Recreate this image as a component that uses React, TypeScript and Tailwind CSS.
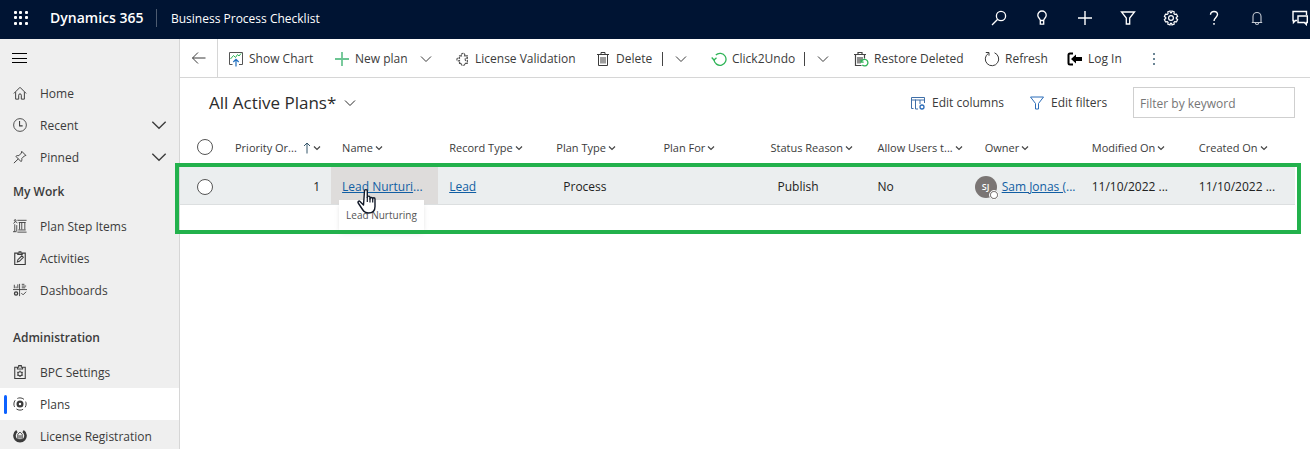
import type { ReactNode } from "react";

type IconProps = { children: ReactNode; className?: string };

function Icon({ children, className = "size-4" }: IconProps) {
  return (
    <svg
      viewBox="0 0 16 16"
      className={`${className} shrink-0`}
      fill="none"
      stroke="currentColor"
      strokeWidth="1"
      aria-hidden="true"
    >
      {children}
    </svg>
  );
}

const Chevron = ({ className = "size-3" }: { className?: string }) => (
  <svg viewBox="0 0 12 12" className={`${className} shrink-0`} fill="none" stroke="currentColor" strokeWidth="1" aria-hidden="true">
    <path d="M1 3.500 6 8.500 11 3.500" />
  </svg>
);

const SearchIcon = () => (
  <Icon>
    <circle cx="10" cy="6" r="4.6" strokeWidth="1.3" />
    <path d="M6.7 9.3 1 15" strokeWidth="1.3" />
  </Icon>
);
const BulbIcon = () => (
  <Icon>
    <path d="M6.300 10.500c0-2-2.500-2.700-2.500-5.300a4.200 4.200 0 0 1 8.400 0c0 2.600-2.500 3.300-2.500 5.300zM6.300 10.500v3.700h3.400v-3.700" strokeWidth="1.300" />
  </Icon>
);
const PlusIcon = () => (
  <Icon>
    <path d="M8 1v14M1 8h14" strokeWidth="1.4" />
  </Icon>
);
const FunnelIcon = () => (
  <Icon>
    <path d="M1.500 2h13L9.700 8v6H6.300V8z" strokeWidth="1.300" />
  </Icon>
);
const GearIcon = () => (
  <Icon>
    <path
      d="m7 1 .4 1.700h1.200L9 1l2.200.8-.3 1.800.8.8 1.800-.3L14.600 6.500 13.300 7.400v1.200l1.300.9-1.100 2.400-1.800-.3-.8.8.3 1.800L9 15l-.4-1.700H7.400L7 15l-2.200-.8.3-1.800-.8-.8-1.800.3L1.400 9.500l1.300-.9V7.400L1.400 6.500l1.100-2.400 1.800.3.8-.8-.3-1.800z"
      strokeWidth="1.200"
    />
    <circle cx="8" cy="8" r="2.400" strokeWidth="1.200" />
  </Icon>
);
const HelpIcon = () => (
  <Icon>
    <path d="M4.500 4.700C4.500 2.500 6 1.500 8 1.500s3.500 1.200 3.500 3.100C11.500 7.300 8 7.600 8 11" strokeWidth="1.400" />
    <path d="M8 13v1.700" strokeWidth="1.500" />
  </Icon>
);
const BellIcon = () => (
  <Icon>
    <path d="M2.800 12.500h10.400M4 12.500V6.500a4 4 0 0 1 8 0v6M6.300 12.700c.3 2.300 3.100 2.300 3.400 0" stroke="#c3c9d2" strokeWidth="1.100" />
  </Icon>
);
const ChatIcon = () => (
  <Icon>
    <path d="M5 10.500H3.500l-2 2v-2H1v-9h13.500V5" strokeWidth="1.400" />
    <path d="M6 6h9.300v6.500h-1v2l-2-2H6z" strokeWidth="1.400" />
  </Icon>
);

const HomeIcon = () => (
  <Icon className="size-3.5">
    <path d="M1 8.500 8 1.500l7 7M3 7v8h3.500v-4.500a1.500 1.500 0 0 1 3 0V15H13V7" strokeWidth="1.100" />
  </Icon>
);
const ClockIcon = () => (
  <Icon className="size-3.5">
    <circle cx="8" cy="8" r="7.300" />
    <path d="M7.500 3.500V9H11" strokeWidth="1.200" />
  </Icon>
);
const PinIcon = () => (
  <Icon className="size-3.5">
    <path d="m10 1.500 4.700 4.700-1.700.6-3 3c.4 1.500 0 2.500-.8 3.500L3.300 7.300c1-.9 2-1.200 3.400-.8l2.800-3zM6 10.200 1 15" strokeWidth="1.100" />
  </Icon>
);
const StepsIcon = () => (
  <Icon className="size-3.5">
    <path d="M.5 5 3 3l2 1.500M5 1.500h10.500M6.500 4h8M7.500 4v8M10 4v8M13.500 4v8M6 12.500h8.500M5 15h10.500M2 6v8.500M4.300 7v7M0 14.500h4" />
    <circle cx="2.500" cy="1.700" r="1" />
  </Icon>
);
const ActivityIcon = () => (
  <Icon className="size-3.5">
    <path d="M5 2.500H2v13h12v-13h-3M5.500 4V2.500h1.500V.8h2v1.700h1.500V4z" strokeWidth="1.300" />
    <path d="m5 12.500.6-2.500 4.500-4.500 1.700 1.700L7.300 11.800z" strokeWidth="1.200" />
  </Icon>
);
const DashboardIcon = () => (
  <Icon className="size-3.5">
    <path d="M7.500 1v14M0 7.500h16M1.500 2v4M3.500 4v2M5.500 1.500V6M10 1.500h3M10 3.500h5M10 5.500h4M9.500 11.500l2 2 3.500-3.500" />
    <circle cx="3.500" cy="12" r="1.800" strokeWidth="1.500" />
  </Icon>
);
const BpcIcon = () => (
  <Icon className="size-3.5">
    <path d="M5 2.500H2v13h12v-13h-3M5 4.500v-2h1.500V.7h3v1.800H11v2z" strokeWidth="1.200" />
    <circle cx="8" cy="10" r="2.400" strokeWidth="1.200" />
    <path d="M8 6.300v1.200M8 12.500v1.200M4.500 8l1.200.7M10.300 11.300l1.200.7M11.500 8l-1.200.7M5.700 11.300l-1.200.7" />
  </Icon>
);
const PlansIcon = () => (
  <Icon className="size-3.5">
    <circle cx="8" cy="8" r="7" strokeDasharray="8 3" strokeDashoffset="4" strokeWidth="1.100" />
    <circle cx="8" cy="8" r="2.700" strokeWidth="2.600" />
  </Icon>
);
const LicenseIcon = () => (
  <Icon className="size-3.5">
    <path d="M4.500 2.500A6.300 6.300 0 1 0 11.500 2.500" strokeWidth="3" />
    <path d="M5.500 6 8 3.500 10.500 6v6h-5zM7 7v4M9 7v4" strokeWidth="1" />
  </Icon>
);

const ChartIcon = () => (
  <Icon>
    <path d="M4.500 13.500H1.500v-12h13v12H11" stroke="#555" />
    <path d="m2.500 8 3-3.500 2 2 2-3 1.500 1.500 2-2.500" stroke="#2fb457" />
    <path d="M8 15.500V8.300M5.300 11 8 8.300l2.700 2.700" stroke="#1f6fc0" strokeWidth="1.200" />
  </Icon>
);
const AddIcon = () => (
  <Icon>
    <path d="M8 1v14M1 8h14" stroke="#6cc593" strokeWidth="1.800" />
  </Icon>
);
const PuzzleIcon = () => (
  <Icon className="size-3.5">
    <path
      d="M4 4.500h2.200C5.500 2.800 6.500 1.500 8 1.500s2.500 1.300 1.800 3H13v2.700c-1.500-.6-2.500 0-2.500 1.300s1 1.900 2.500 1.300V13H9.800c.6 1.500-.3 2.300-1.800 2.300S5.600 14.500 6.200 13H4V9.800c-1.700.7-3 0-3-1.300s1.300-2 3-1.300z"
      stroke="#555"
      strokeWidth="1.300"
      strokeDasharray="3 .7"
    />
  </Icon>
);
const TrashIcon = () => (
  <Icon>
    <path d="M2 3.500h12M6 3V1.500h4V3M3.500 3.500v11h9v-11M6 6v6.500M8 6v6.500M10 6v6.500" />
  </Icon>
);
const UndoIcon = () => (
  <Icon>
    <path d="M3 8.500A6 6 0 1 0 4.800 4" stroke="#2fb457" strokeWidth="1.300" />
    <path d="m.7 6.500 2.300 2.500 2.500-2.200" stroke="#2fb457" strokeWidth="1.300" />
  </Icon>
);
const RestoreIcon = () => (
  <Icon>
    <path d="M1 3.500h12M5 3V1.500h4V3M2.500 3.500v11h6M11.500 3.500v4M5 6v6.500M7 6v6.500M9 6v3" stroke="#444" strokeWidth="1.200" />
    <path d="M8.500 10.500a3.300 3.300 0 1 1 .8 3.500M8 8.500v2.700h2.700" stroke="#2fb457" strokeWidth="1.300" />
  </Icon>
);
const RefreshIcon = () => (
  <Icon>
    <path d="M10.500 1.800A6.700 6.700 0 1 1 4.500 2.300M1.800 1.500h3.200v3.200" />
  </Icon>
);
const LoginIcon = () => (
  <Icon>
    <path d="M6 2.500H3q-1.500 0-1.500 1.500v8q0 1.500 1.500 1.500h3" stroke="#000" strokeWidth="2" />
    <path d="M4 8 9 3.500v2.500h6v4H9v2.500z" fill="#000" stroke="none" />
  </Icon>
);
const ColumnsIcon = () => (
  <Icon>
    <path d="M8 14H5.500V4.500M1.500 13.500V2.500h13V8M1.500 5h13M10 5v4M1.500 13.500h2" stroke="#3f6fa8" />
    <circle cx="12" cy="12" r="2" stroke="#2b6cb8" strokeWidth="1.300" />
  </Icon>
);

const topActions = [
  { label: "Search", icon: <SearchIcon /> },
  { label: "Insights", icon: <BulbIcon /> },
  { label: "Create", icon: <PlusIcon /> },
  { label: "Advanced find", icon: <FunnelIcon /> },
  { label: "Settings", icon: <GearIcon /> },
  { label: "Help", icon: <HelpIcon /> },
  { label: "Notifications", icon: <BellIcon /> },
  { label: "Chat", icon: <ChatIcon /> },
];

function TopBar() {
  return (
    <header className="flex h-[39px] items-center overflow-hidden bg-[#001433] text-white">
      <button aria-label="App launcher" className="mb-1 ml-3 flex w-[18px] justify-center">
        <svg viewBox="0 0 14 14" className="size-3.5" fill="#fff" aria-hidden="true">
          {[0, 5, 11].map((y) =>
            [0, 5, 11].map((x) => <rect key={`${x}-${y}`} x={x} y={y} width="3" height="3" rx="1" />),
          )}
        </svg>
      </button>
      <a href="#home" className="mb-1 ml-5 w-[107px] border-r border-[#4d5b70] text-sm leading-[18px] font-semibold whitespace-nowrap">
        Dynamics 365
      </a>
      <span className="mb-0.5 ml-[14px] text-xs whitespace-nowrap">Business Process Checklist</span>
      <nav className="-mr-[11px] mb-1 ml-auto flex shrink-0" aria-label="Tools">
        {topActions.map((a) => (
          <button key={a.label} aria-label={a.label} className="flex h-[35px] w-[43px] items-center justify-center">
            {a.icon}
          </button>
        ))}
      </nav>
    </header>
  );
}

type NavItemProps = { label: string; icon: ReactNode; active?: boolean; expandable?: boolean };

function NavItem({ label, icon, active, expandable }: NavItemProps) {
  return (
    <a
      href="#nav"
      aria-current={active ? "page" : undefined}
      className={`relative flex h-8 items-center pr-3 pl-[13px] text-xs ${active ? "bg-white" : ""}`}
    >
      {active && <span className="absolute top-[7px] left-1 h-[19px] w-[3px] rounded-sm bg-[#0d62ff]" />}
      {icon}
      <span className="ml-[13px] flex-1 pt-0.5 whitespace-nowrap">{label}</span>
      {expandable && <Chevron className="size-4" />}
    </a>
  );
}

function Sidebar() {
  return (
    <nav aria-label="Site map" className="w-[180px] shrink-0 overflow-hidden border-r border-[#d6d6d6] bg-[#efefef] text-[#3b3b3b]">
      <button aria-label="Toggle navigation" className="flex h-[38px] items-center pl-3 text-black">
        <svg viewBox="0 0 15 12" className="h-3 w-[15px]" stroke="currentColor" strokeWidth="1" aria-hidden="true">
          <path d="M0 1.500h15M0 6.500h15M0 10.500h15" />
        </svg>
      </button>
      <NavItem label="Home" icon={<HomeIcon />} />
      <NavItem label="Recent" icon={<ClockIcon />} expandable />
      <NavItem label="Pinned" icon={<PinIcon />} expandable />
      <h2 className="flex h-[37px] items-center pl-[13px] text-xs font-semibold">My Work</h2>
      <NavItem label="Plan Step Items" icon={<StepsIcon />} />
      <NavItem label="Activities" icon={<ActivityIcon />} />
      <NavItem label="Dashboards" icon={<DashboardIcon />} />
      <h2 className="mt-[13px] flex h-[37px] items-center pl-[13px] text-xs font-semibold">Administration</h2>
      <NavItem label="BPC Settings" icon={<BpcIcon />} />
      <NavItem label="Plans" icon={<PlansIcon />} active />
      <NavItem label="License Registration" icon={<LicenseIcon />} />
    </nav>
  );
}

type CommandProps = { label: string; icon: ReactNode; width: string; split?: boolean; menu?: boolean };

function Command({ label, icon, width, split, menu }: CommandProps) {
  return (
    <div className={`flex shrink-0 items-center ${width}`}>
      <button className="flex items-center gap-[5px] whitespace-nowrap">
        {icon}
        <span className="pt-px">{label}</span>
      </button>
      {(split || menu) && (
        <button aria-label={`More ${label} options`} className="mr-6 ml-auto flex h-4 items-center gap-3">
          {split && <span className="h-3.5 w-px bg-[#444]" />}
          <Chevron className="size-3" />
        </button>
      )}
    </div>
  );
}

function CommandBar() {
  return (
    <div className="flex h-[39px] items-stretch border-b border-[#d6d6d6] text-xs text-[#3b3b3b]">
      <button aria-label="Back" className="flex w-[38px] shrink-0 items-center justify-center border-r border-[#d6d6d6]">
        <Icon>
          <path d="M1.500 8h13M7 2.500 1.500 8 7 13.500" />
        </Icon>
      </button>
      <div className="flex min-w-0 flex-1 items-center overflow-hidden pt-px pl-[10px]">
        <Command label="Show Chart" icon={<ChartIcon />} width="w-[106px]" />
        <Command label="New plan" icon={<AddIcon />} width="w-[122px]" menu />
        <Command label="License Validation" icon={<PuzzleIcon />} width="w-[139px]" />
        <Command label="Delete" icon={<TrashIcon />} width="w-[116px]" split />
        <Command label="Click2Undo" icon={<UndoIcon />} width="w-[142px]" split />
        <Command label="Restore Deleted" icon={<RestoreIcon />} width="w-[131px]" />
        <Command label="Refresh" icon={<RefreshIcon />} width="w-[83px]" />
        <Command label="Log In" icon={<LoginIcon />} width="w-[79px]" />
        <button aria-label="More commands" className="flex size-4 items-center justify-center">
          <svg viewBox="0 0 2 12" className="h-3 w-0.5" fill="#6b8595" aria-hidden="true">
            <path d="M0 0h2v2H0zM0 5h2v2H0zM0 10h2v2H0z" />
          </svg>
        </button>
      </div>
    </div>
  );
}

function ViewHeader() {
  return (
    <div className="flex h-[52px] items-center pr-[15px] pb-[3px] pl-[29px] text-xs text-[#3b3b3b]">
      <h1 className="text-[17px] leading-6 font-medium whitespace-nowrap text-[#2b2b2b]">
        <button className="flex items-center gap-2">
          All Active Plans*
          <Chevron className="size-3" />
        </button>
      </h1>
      <button className="ml-auto flex w-[119px] items-center gap-[6px] whitespace-nowrap">
        <ColumnsIcon />
        <span className="pt-px">Edit columns</span>
      </button>
      <button className="flex w-[104px] items-center gap-[6px] whitespace-nowrap">
        <span className="text-[#2b6cb8]">
          <Icon>
            <path d="M1.500 2h13L9.500 8.500V14H6.500V8.500z" />
          </Icon>
        </span>
        <span className="pt-px">Edit filters</span>
      </button>
      <input
        type="search"
        aria-label="Filter by keyword"
        placeholder="Filter by keyword"
        className="h-[31px] w-[162px] border border-[#cfcfcf] px-[6px] pt-0.5 text-xs placeholder:text-[#767676]"
      />
    </div>
  );
}

const columns = [
  "Priority Or...",
  "Name",
  "Record Type",
  "Plan Type",
  "Plan For",
  "Status Reason",
  "Allow Users t...",
  "Owner",
  "Modified On",
  "Created On",
];

const td = "h-[38px] border-b border-[#dcdfe0] pt-0.5 whitespace-nowrap";

function HandCursor() {
  return (
    <svg viewBox="0 0 20 26" className="absolute top-[21px] left-[26px] z-20 h-[26px] w-5" aria-hidden="true">
      <path
        d="M6.500 17 3 13.500c-1-1-2.500.2-1.800 1.500l4.300 6.500c1.500 2.300 3 3.500 6 3.500 4 0 6.500-2 6.500-6.500V11c0-1.700-2.300-1.700-2.300 0 0-2-2.700-2-2.700 0v-1.500c0-1.800-2.700-1.800-2.700 0V3c0-1.800-2.800-1.800-2.800 0z"
        fill="#fff"
        stroke="#111827"
        strokeWidth="1.400"
        strokeLinejoin="round"
      />
      <path d="M10.300 9v5M13 10.500v4M15.700 11v3.500" stroke="#111827" strokeWidth="1.200" />
    </svg>
  );
}

const tick = "block size-4 appearance-none rounded-full border border-[#555] bg-white";

function Grid() {
  return (
    <div className="relative pr-[15px]">
      <table className="w-full table-fixed border-separate border-spacing-0 text-left">
        <thead>
          <tr className="text-[11px] text-[#3b3b3b]">
            <th className="h-[37px] w-[44px] border-b border-[#d6d6d6] pb-0.5 pl-[17px]">
              <input type="checkbox" aria-label="Select all" className={tick} />
            </th>
            {columns.map((c, i) => (
              <th key={c} className="border-b border-[#d6d6d6] pl-[11px] font-normal whitespace-nowrap">
                <button className="flex items-center gap-0.5">
                  {c}
                  {i === 0 && (
                    <svg viewBox="0 0 8 12" className="ml-1 h-3 w-2" fill="none" stroke="#35566b" aria-hidden="true">
                      <path d="M4 11.500V1M1 4l3-3 3 3" />
                    </svg>
                  )}
                  <svg viewBox="0 0 8 8" className="size-2 shrink-0" fill="none" stroke="#444" strokeWidth="1.200" aria-hidden="true">
                    <path d="M1 2.500 4 5.500 7 2.500" />
                  </svg>
                </button>
              </th>
            ))}
          </tr>
        </thead>
        <tbody>
          <tr className="bg-[#ebeeef] text-xs text-[#222]">
            <td className={`${td} pl-[17px]`}>
              <input type="checkbox" aria-label="Select Lead Nurturing" className={tick} />
            </td>
            <td className={`${td} pr-[11px] text-right`}>1</td>
            <td className={`${td} relative bg-[#dedcdb] pl-[11px]`}>
              <a href="#lead-nurturing" className="text-[#115ea3] underline">Lead Nurturi</a>
              <span className="text-[#115ea3]">...</span>
              <div role="tooltip" className="absolute top-[33px] left-2 z-10 flex h-[30px] items-center bg-white px-[7px] pt-0.5 text-[10px] text-[#555] shadow-md">
                Lead Nurturing
              </div>
              <HandCursor />
            </td>
            <td className={`${td} pl-[11px]`}>
              <a href="#lead" className="text-[#115ea3] underline">Lead</a>
            </td>
            <td className={`${td} pl-[18px]`}>Process</td>
            <td className={td} />
            <td className={`${td} pl-[18px]`}>Publish</td>
            <td className={`${td} pl-[11px]`}>No</td>
            <td className={`${td} pl-px`}>
              <div className="flex items-center gap-[5px]">
                <span className="relative flex size-[22px] shrink-0 items-center justify-center rounded-full bg-[#7a7574] text-[9px] font-semibold text-white">
                  SJ
                  <span className="absolute -right-0.5 -bottom-0.5 size-[10px] rounded-full border border-white bg-[#7a7574] p-px">
                    <span className="block size-full rounded-full bg-white" />
                  </span>
                </span>
                <span className="text-[#115ea3]">
                  <a href="#owner" className="underline">Sam Jonas (</a>...
                </span>
              </div>
            </td>
            <td className={`${td} pl-[11px]`}>11/10/2022 ...</td>
            <td className={`${td} pl-[11px]`}>11/10/2022 ...</td>
          </tr>
        </tbody>
      </table>
      <div className="pointer-events-none absolute top-[33px] right-[9px] -left-[5px] z-30 h-[71px] border-4 border-[#22b14c]" />
    </div>
  );
}

export default function App() {
  return (
    <div className="flex min-h-screen flex-col bg-white font-['Open_Sans',sans-serif]">
      <TopBar />
      <div className="flex flex-1">
        <Sidebar />
        <main className="min-w-0 flex-1">
          <CommandBar />
          <ViewHeader />
          <Grid />
        </main>
      </div>
    </div>
  );
}
